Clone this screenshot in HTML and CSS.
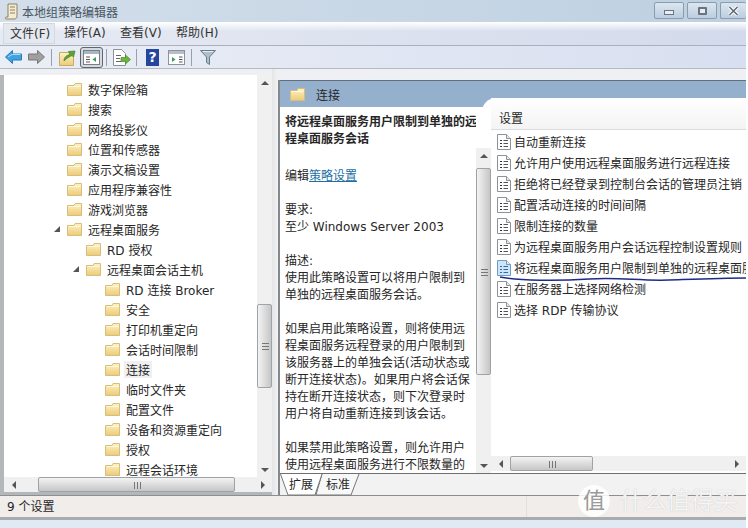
FILE: index.html
```html
<!DOCTYPE html>
<html lang="zh-CN">
<head>
    <meta charset="UTF-8">
    <title>本地组策略编辑器</title>
    <link rel="stylesheet" href="styles.css">
</head>
<body>
    <!-- shared icons -->
    <svg class="defs" aria-hidden="true">
        <defs>
            <linearGradient id="folderFill" x1="0" y1="0" x2="0" y2="1">
                <stop offset="0" stop-color="#fdf3c4"/>
                <stop offset="1" stop-color="#eccb78"/>
            </linearGradient>
            <symbol id="folder" viewBox="0 0 15 15">
                <path d="M0.5 3.5V13.5H14.5V1.5H8L7 3.5Z" fill="url(#folderFill)" stroke="#d8bd7c"/>
                <path d="M1.5 4.5H13.5" stroke="#fff8dc"/>
            </symbol>
            <symbol id="doc" viewBox="0 0 14 16">
                <path d="M0.5 0.5H9.5L13.5 4.5V15.5H0.5Z" fill="var(--page, #fff)" stroke="var(--edge, #8d9298)"/>
                <path d="M9.5 0.5V4.5H13.5" fill="#e8e8e8" stroke="var(--edge, #8d9298)"/>
                <path d="M3 6.5H5M3 9.5H5M3 12.5H5" stroke="var(--mark, #333)"/>
                <path d="M6.5 6.5H11M6.5 9.5H11M6.5 12.5H11" stroke="var(--mark, #555)"/>
            </symbol>
        </defs>
    </svg>

    <div class="window">
        <header class="titlebar">
            <svg class="title-icon" width="15" height="17" viewBox="0 0 15 17">
                <path d="M4 1H13V13C13 15 12 16 10 16H2C1 16 1 14 2.500 14H4Z" fill="#f5ecd0" stroke="#8c8267"/>
                <path d="M6 4H11M6 7H11M6 10H11" stroke="#8c8267"/>
            </svg>
            <span class="title-text">本地组策略编辑器</span>
            <div class="win-buttons">
                <div class="win-btn win-min"><span class="min-glyph"></span></div>
                <div class="win-btn win-max"><span class="max-glyph"></span></div>
                <div class="win-btn win-close">
                    <svg width="11" height="10" viewBox="0 0 11 10"><path d="M1.500 1L9.500 9M9.500 1L1.500 9" stroke="#fff" stroke-width="3.500"/><path d="M1.500 1L9.500 9M9.500 1L1.500 9" stroke="#5c6670" stroke-width="1.500"/></svg>
                </div>
            </div>
        </header>

        <nav class="menubar">
            <span class="menu-item menu-active">文件(F)</span>
            <span class="menu-item">操作(A)</span>
            <span class="menu-item">查看(V)</span>
            <span class="menu-item">帮助(H)</span>
        </nav>

        <div class="toolbar">
            <svg class="tool tool-back" width="17" height="14" viewBox="0 0 17 14"><path d="M0.500 7L7.500 0.500V4H16.500V10H7.500V13.500Z" fill="#3fa3e0" stroke="#2a78b8"/><path d="M3 7L7 4.500H15.500" stroke="#a8dcf7" fill="none"/></svg>
            <svg class="tool tool-forward" width="17" height="14" viewBox="0 0 17 14"><path d="M16.500 7L9.500 0.500V4H0.500V10H9.500V13.500Z" fill="#a0a0a0" stroke="#777"/></svg>
            <span class="tool-sep sep-first"></span>
            <svg class="tool tool-up" width="17" height="18" viewBox="0 0 17 18"><path d="M0.500 4.500V17.500H14.500V4.500Z" fill="url(#folderFill)" stroke="#c9ab66"/><path d="M5 13C5 9 8 7 11 6.500L9.500 3.500L16 3L14.500 9L13 7.500C10 9 8 10 5 13Z" fill="#5da23a" stroke="#44802a" stroke-width="0.700"/></svg>
            <div class="tool-active">
                <svg width="17" height="15" viewBox="0 0 17 15"><rect x="0.500" y="0.500" width="16" height="14" fill="#fff" stroke="#7a7f85"/><rect x="1" y="1" width="15" height="3" fill="#a9b6c4"/><path d="M3 7H7M3 9.500H7M3 12H7" stroke="#555"/><path d="M13 7V12L9.500 9.500Z" fill="#3f9a5a"/></svg>
            </div>
            <span class="tool-sep sep-second"></span>
            <svg class="tool tool-export" width="18" height="17" viewBox="0 0 18 17"><path d="M0.500 0.500H8.500L12.500 4.500V16.500H0.500Z" fill="#fff" stroke="#8d9298"/><path d="M3 6.500H8M3 9.500H7M3 12.500H8" stroke="#666"/><path d="M8 8.500H12.500V6L17.500 10.500L12.500 15V12.500H8Z" fill="#6cb33f" stroke="#4a8a2a" stroke-width="0.700"/></svg>
            <span class="tool-sep sep-third"></span>
            <div class="tool-help">?</div>
            <svg class="tool tool-panel" width="17" height="15" viewBox="0 0 17 15"><rect x="0.500" y="0.500" width="16" height="14" fill="#fff" stroke="#8d9298"/><rect x="1" y="1" width="15" height="3" fill="#b4bfcb"/><path d="M11 7H14.500M11 9.500H14.500M11 12H14.500" stroke="#555"/><path d="M4 7V12L7.500 9.500Z" fill="#3f9a5a"/></svg>
            <span class="tool-sep sep-fourth"></span>
            <svg class="tool tool-filter" width="16" height="15" viewBox="0 0 16 15"><path d="M0.500 0.500H15.500L9.500 7V14.500L6.500 12.500V7Z" fill="#aebfcc" stroke="#6a7c8a"/><path d="M3 1.500H13" stroke="#e4edf3"/></svg>
        </div>

        <main class="workspace">
            <section class="tree-col">
                <div class="tree-main">
                    <ul class="tree">
                        <li class="node lvl1"><span class="slot"></span><svg class="folder"><use href="#folder"/></svg><span>数字保险箱</span></li>
                        <li class="node lvl1"><span class="slot"></span><svg class="folder"><use href="#folder"/></svg><span>搜索</span></li>
                        <li class="node lvl1"><span class="slot"></span><svg class="folder"><use href="#folder"/></svg><span>网络投影仪</span></li>
                        <li class="node lvl1"><span class="slot"></span><svg class="folder"><use href="#folder"/></svg><span>位置和传感器</span></li>
                        <li class="node lvl1"><span class="slot"></span><svg class="folder"><use href="#folder"/></svg><span>演示文稿设置</span></li>
                        <li class="node lvl1"><span class="slot"></span><svg class="folder"><use href="#folder"/></svg><span>应用程序兼容性</span></li>
                        <li class="node lvl1"><span class="slot"></span><svg class="folder"><use href="#folder"/></svg><span>游戏浏览器</span></li>
                        <li class="node lvl1"><span class="slot"><i class="twisty"></i></span><svg class="folder"><use href="#folder"/></svg><span>远程桌面服务</span></li>
                        <li class="node lvl2"><span class="slot"></span><svg class="folder"><use href="#folder"/></svg><span>RD 授权</span></li>
                        <li class="node lvl2"><span class="slot"><i class="twisty"></i></span><svg class="folder"><use href="#folder"/></svg><span>远程桌面会话主机</span></li>
                        <li class="node lvl3"><span class="slot"></span><svg class="folder"><use href="#folder"/></svg><span>RD 连接 Broker</span></li>
                        <li class="node lvl3"><span class="slot"></span><svg class="folder"><use href="#folder"/></svg><span>安全</span></li>
                        <li class="node lvl3"><span class="slot"></span><svg class="folder"><use href="#folder"/></svg><span>打印机重定向</span></li>
                        <li class="node lvl3"><span class="slot"></span><svg class="folder"><use href="#folder"/></svg><span>会话时间限制</span></li>
                        <li class="node lvl3 node-current"><span class="slot"></span><svg class="folder"><use href="#folder"/></svg><span>连接</span></li>
                        <li class="node lvl3"><span class="slot"></span><svg class="folder"><use href="#folder"/></svg><span>临时文件夹</span></li>
                        <li class="node lvl3"><span class="slot"></span><svg class="folder"><use href="#folder"/></svg><span>配置文件</span></li>
                        <li class="node lvl3"><span class="slot"></span><svg class="folder"><use href="#folder"/></svg><span>设备和资源重定向</span></li>
                        <li class="node lvl3"><span class="slot"></span><svg class="folder"><use href="#folder"/></svg><span>授权</span></li>
                        <li class="node lvl3"><span class="slot"></span><svg class="folder"><use href="#folder"/></svg><span>远程会话环境</span></li>
                    </ul>
                    <div class="vscroll tree-vscroll">
                        <span class="arrow"><i class="tri tri-up"></i></span>
                        <span class="track-a"></span>
                        <span class="thumb-v"></span>
                        <span class="track-b"></span>
                        <span class="arrow"><i class="tri tri-down"></i></span>
                    </div>
                </div>
                <div class="hscroll tree-hscroll">
                    <span class="arrow"><i class="tri tri-left"></i></span>
                    <span class="thumb-h"></span>
                    <span class="track-b"></span>
                    <span class="arrow"><i class="tri tri-right"></i></span>
                </div>
            </section>

            <div class="splitter"></div>

            <section class="detail-col">
                <div class="detail-head">
                    <svg class="folder"><use href="#folder"/></svg>
                    <span>连接</span>
                </div>
                <div class="detail-body">
                    <article class="desc">
                        <h2 class="desc-title">将远程桌面服务用户限制到单独的远<br>程桌面服务会话</h2>
                        <p class="desc-edit">编辑<a class="desc-link">策略设置</a></p>
                        <p>要求:<br>至少 Windows Server 2003</p>
                        <p>描述:<br>使用此策略设置可以将用户限制到<br>单独的远程桌面服务会话。</p>
                        <p>如果启用此策略设置，则将使用远<br>程桌面服务远程登录的用户限制到<br>该服务器上的单独会话(活动状态或<br>断开连接状态)。如果用户将会话保<br>持在断开连接状态，则下次登录时<br>用户将自动重新连接到该会话。</p>
                        <p>如果禁用此策略设置，则允许用户<br>使用远程桌面服务进行不限数量的</p>
                    </article>
                    <div class="vscroll desc-vscroll">
                        <span class="arrow"><i class="tri tri-up"></i></span>
                        <span class="thumb-v"></span>
                        <span class="track-b"></span>
                        <span class="arrow"><i class="tri tri-down"></i></span>
                    </div>
                    <div class="settings">
                        <div class="settings-head">设置</div>
                        <ul class="settings-list">
                            <li class="setting"><svg class="doc"><use href="#doc"/></svg><span>自动重新连接</span></li>
                            <li class="setting"><svg class="doc"><use href="#doc"/></svg><span>允许用户使用远程桌面服务进行远程连接</span></li>
                            <li class="setting"><svg class="doc"><use href="#doc"/></svg><span>拒绝将已经登录到控制台会话的管理员注销</span></li>
                            <li class="setting"><svg class="doc"><use href="#doc"/></svg><span>配置活动连接的时间间隔</span></li>
                            <li class="setting"><svg class="doc"><use href="#doc"/></svg><span>限制连接的数量</span></li>
                            <li class="setting"><svg class="doc"><use href="#doc"/></svg><span>为远程桌面服务用户会话远程控制设置规则</span></li>
                            <li class="setting setting-on"><svg class="doc"><use href="#doc"/></svg><span>将远程桌面服务用户限制到单独的远程桌面服务会话</span></li>
                            <li class="setting"><svg class="doc"><use href="#doc"/></svg><span>在服务器上选择网络检测</span></li>
                            <li class="setting"><svg class="doc"><use href="#doc"/></svg><span>选择 RDP 传输协议</span></li>
                        </ul>
                        <div class="hscroll list-hscroll">
                            <span class="arrow"><i class="tri tri-left"></i></span>
                            <span class="thumb-h"></span>
                            <span class="track-b"></span>
                            <span class="arrow"><i class="tri tri-right"></i></span>
                        </div>
                        <!-- pen mark drawn over the selected row -->
                        <svg class="pen-mark" width="250" height="10" viewBox="0 0 250 10"><path d="M1 3C20 7 60 7 90 5C120 3 140 7 170 6C200 5 225 4 249 4" fill="none" stroke="#1c2a8c" stroke-width="1.500"/></svg>
                    </div>
                </div>
                <div class="tabstrip">
                    <svg class="tab-lines" width="90" height="22" viewBox="0 0 90 22"><path d="M35 0L42 0L36 21H71L79 0" fill="#f8f8f8" stroke="#777"/><path d="M0.500 0L8 21H35L42 0" fill="#fff" stroke="#777"/></svg>
                    <span class="tab">扩展</span>
                    <span class="tab">标准</span>
                </div>
            </section>
        </main>

        <footer class="statusbar">
            <span class="status-main">9 个设置</span>
            <span class="status-side"></span>
        </footer>
        <div class="frame-edge"></div>

        <div class="watermark">
            <span class="wm-badge">值</span>
            <span class="wm-text">什么值得买</span>
        </div>
    </div>
</body>
</html>
```

FILE: styles.css
```css
/* General */
* {
    box-sizing: border-box;
}

html, body {
    margin: 0;
    height: 528px;
    background: #fff;
    overflow: hidden;
}

body {
    font-family: "DejaVu Sans", "Noto Sans CJK SC", sans-serif;
    font-size: 12px;
    color: #262626;
}

.defs {
    position: absolute;
    width: 0;
    height: 0;
}

ul {
    list-style: none;
    margin: 0;
    padding: 0;
}

.window {
    position: relative;
    width: 746px;
    height: 528px;
    display: flex;
    flex-direction: column;
    background: #dfeaf4;
}

/* Title bar */
.titlebar {
    height: 22px;
    display: flex;
    align-items: center;
    padding-left: 4px;
    background: linear-gradient(90deg, #d3deea, #c6d6e5 60%, #bdd0e1);
}

.title-icon {
    margin-right: 3px;
}

.title-text {
    color: #4a5560;
}

.win-buttons {
    margin-left: auto;
    display: flex;
    gap: 3px;
    align-self: flex-start;
    padding-top: 2px;
}

.win-btn {
    width: 30px;
    height: 17px;
    border: 1px solid #8b9cad;
    border-radius: 2px;
    background: linear-gradient(#dbe6f0, #bccde0);
    display: flex;
    align-items: center;
    justify-content: center;
}

.win-close {
    width: 26px;
    border-right: 0;
}

.min-glyph {
    width: 10px;
    height: 5px;
    margin-top: 4px;
    background: #e6edf4;
    border: 1px solid #6a7480;
}

.max-glyph {
    width: 9px;
    height: 8px;
    background: #e6edf4;
    border: 2px solid #6a7480;
    border-radius: 1px;
}

/* Menu bar */
.menubar {
    height: 24px;
    display: flex;
    padding: 1px 0 0 3px;
    border-bottom: 1px solid #aab0bc;
    background:
        linear-gradient(#fff, rgba(255, 255, 255, 0) 40%),
        linear-gradient(90deg, #e6eaf3, #d3daeb);
}

.menu-item {
    height: 21px;
    width: 56px;
    padding-left: 7px;
    line-height: 20px;
    color: #333;
}

.menu-active {
    width: 52px;
    margin-right: 2px;
    background: #e4e8ef;
    border: 1px solid #d4d8e0;
    padding-left: 6px;
}

/* Tool bar */
.toolbar {
    height: 23px;
    display: flex;
    align-items: center;
    border-bottom: 1px solid #b5b9c2;
    background: linear-gradient(90deg, #eaeef6, #d8dff0);
}

.tool {
    flex: none;
}

.tool-back {
    margin-left: 5px;
}

.tool-forward {
    margin-left: 6px;
}

.tool-sep {
    width: 1px;
    height: 17px;
    background: #9aa0aa;
}

.sep-first {
    margin-left: 6px;
}

.tool-up {
    margin-left: 7px;
}

.tool-active {
    width: 23px;
    height: 21px;
    margin-left: 4px;
    border: 1px solid #5f666e;
    border-radius: 3px;
    background: #d5d9e0;
    display: flex;
    align-items: center;
    justify-content: center;
}

.sep-second {
    margin-left: 3px;
}

.tool-export {
    margin-left: 6px;
}

.sep-third {
    margin-left: 5px;
}

.tool-help {
    width: 13px;
    height: 17px;
    margin-left: 9px;
    background: #26459c;
    color: #fff;
    font-weight: bold;
    font-size: 14px;
    line-height: 17px;
    text-align: center;
}

.tool-panel {
    margin-left: 9px;
}

.sep-fourth {
    margin-left: 6px;
}

.tool-filter {
    margin-left: 8px;
}

/* Workspace */
.workspace {
    height: 426px;
    display: flex;
    background: #eef0f3;
    border-bottom: 0;
}

.tree-col {
    width: 272px;
    margin-top: 6px;
    padding: 0 0 3px 4px;
    background: #b4b7ba;
    display: flex;
    flex-direction: column;
}

.tree-main {
    flex: 1;
    min-height: 0;
    display: flex;
}

.tree {
    flex: 1;
    overflow: hidden;
    padding-top: 4px;
    background: #fff;
}

.node {
    height: 20px;
    display: flex;
    align-items: center;
    white-space: nowrap;
}

.lvl1 {
    padding-left: 44px;
}

.lvl2 {
    padding-left: 63px;
}

.lvl3 {
    padding-left: 82px;
}

.slot {
    width: 19px;
    display: flex;
    justify-content: flex-end;
    padding-right: 7px;
}

.twisty {
    width: 6px;
    height: 6px;
    background: #555;
    clip-path: polygon(100% 0, 100% 100%, 0 100%);
}

.folder {
    width: 15px;
    height: 15px;
    flex: none;
    margin-right: 6px;
}

.node-current span:last-child {
    background: #f0f0f0;
    padding: 0 2px;
    margin-left: -2px;
}

/* Scrollbars */
.vscroll {
    width: 15px;
    flex: none;
    display: flex;
    flex-direction: column;
    background: #f0f0f0;
}

.hscroll {
    height: 15px;
    flex: none;
    display: flex;
    background: #f0f0f0;
}

.arrow {
    flex: none;
    width: 15px;
    height: 15px;
    display: flex;
    align-items: center;
    justify-content: center;
}

.tri {
    width: 0;
    height: 0;
    border: 4px solid transparent;
}

.tri-up {
    border-top: 0;
    border-bottom-color: #555;
}

.tri-down {
    border-bottom: 0;
    border-top-color: #555;
}

.tri-left {
    border-left: 0;
    border-right-color: #555;
}

.tri-right {
    border-right: 0;
    border-left-color: #555;
}

.track-b {
    flex: 1;
}

.thumb-v,
.thumb-h {
    position: relative;
    flex: none;
    border: 1px solid #9ea3a8;
    border-radius: 2px;
}

.thumb-v {
    background: linear-gradient(90deg, #f3f3f3, #d8d8d8 60%, #c6c6c6);
}

.thumb-h {
    background: linear-gradient(#f3f3f3, #d8d8d8 60%, #c6c6c6);
}

.thumb-v::after,
.thumb-h::after {
    content: "";
    position: absolute;
    left: 50%;
    top: 50%;
}

.thumb-v::after {
    width: 7px;
    height: 7px;
    margin: -3px 0 0 -3px;
    background: repeating-linear-gradient(#777 0 1px, transparent 1px 3px);
}

.thumb-h::after {
    width: 7px;
    height: 7px;
    margin: -3px 0 0 -3px;
    background: repeating-linear-gradient(90deg, #777 0 1px, transparent 1px 3px);
}

.track-a {
    height: 214px;
    flex: none;
}

.tree-vscroll .thumb-v {
    height: 84px;
}

.tree-hscroll .arrow {
    width: 19px;
}

.tree-hscroll .thumb-h {
    width: 197px;
    margin-left: 15px;
}

.splitter {
    width: 6px;
    background: linear-gradient(90deg, #e4e5e7, #f2f2f2);
}

/* Right pane */
.detail-col {
    flex: 1;
    min-width: 0;
    margin-top: 11px;
    border-left: 2px solid #84898f;
    display: flex;
    flex-direction: column;
    background: #fff;
}

.detail-head {
    height: 27px;
    flex: none;
    display: flex;
    align-items: center;
    padding-left: 10px;
    background: #94b0cd;
    border-top: 1px solid #626f7c;
}

.detail-head .folder {
    margin-right: 11px;
}

.detail-body {
    flex: 1;
    min-height: 0;
    display: flex;
    overflow: hidden;
    padding-top: 9px;
    margin-top: -9px;
}

.desc {
    width: 196px;
    flex: none;
    padding: 7px 0 0 5px;
    margin-top: 0;
    line-height: 17px;
    overflow: hidden;
    white-space: nowrap;
}

.desc-title {
    margin: 0;
    font-size: 12px;
    line-height: 17px;
    font-weight: bold;
}

.desc p {
    margin: 17px 0 0;
}

.desc .desc-edit {
    margin-top: 20px;
}

.desc-link {
    color: #1d6fa5;
    text-decoration: underline;
}

.desc-vscroll {
    position: relative;
    z-index: 1;
    margin-top: 41px;
}

.desc-vscroll .thumb-v {
    height: 207px;
    margin-top: 5px;
}

.settings {
    position: relative;
    flex: 1;
    min-width: 0;
    height: 375px;
    margin: -9px 0 0 -9px;
    border-top-left-radius: 14px;
    background: #fff;
    display: flex;
    flex-direction: column;
}

.settings-head {
    height: 32px;
    flex: none;
    margin-left: 9px;
    padding: 12px 0 0 8px;
    line-height: 18px;
    background: linear-gradient(#fff, #f4f4f4);
    border-bottom: 1px solid #dcdcdc;
}

.settings-list {
    flex: 1;
    padding: 1px 0 0 15px;
}

.setting {
    height: 21px;
    display: flex;
    align-items: center;
    white-space: nowrap;
    overflow: hidden;
}

.doc {
    width: 14px;
    height: 16px;
    flex: none;
    margin-right: 3px;
}

.setting-on .doc {
    --page: #cfe4f7;
    --edge: #6d9cc4;
    --mark: #2a6ea8;
}

.list-hscroll {
    margin: 0 0 2px 9px;
}

.list-hscroll .arrow {
    width: 19px;
}

.list-hscroll .thumb-h {
    width: 83px;
}

.pen-mark {
    position: absolute;
    left: 17px;
    top: 176px;
}

/* Tabs */
.tabstrip {
    position: relative;
    height: 22px;
    flex: none;
    display: flex;
    gap: 13px;
    padding: 1px 0 0 9px;
    background: #f2f2f2;
    border-top: 1px solid #6f6f6f;
}

.tab-lines {
    position: absolute;
    left: 0;
    top: 0;
}

.tab {
    position: relative;
    line-height: 21px;
}

/* Status bar */
.statusbar {
    height: 22px;
    display: flex;
    background: #f0edeb;
    border-top: 1px solid #8e8e8e;
}

.status-main {
    width: 527px;
    padding-left: 7px;
    line-height: 22px;
    border-right: 1px solid #e2dfdd;
}

.frame-edge {
    height: 3px;
    background: #a9abad;
}

/* Watermark */
.watermark {
    position: absolute;
    left: 578px;
    top: 485px;
    display: flex;
    align-items: center;
    gap: 10px;
}

.wm-badge {
    width: 32px;
    height: 32px;
    border-radius: 50%;
    background: rgba(255, 255, 255, 0.85);
    color: #9a9a9a;
    font-size: 22px;
    line-height: 31px;
    text-align: center;
}

.wm-text {
    font-size: 23.500px;
    line-height: 32px;
    color: rgba(255, 255, 255, 0.85);
    text-shadow: 0 0 1px #bbb;
}
```
